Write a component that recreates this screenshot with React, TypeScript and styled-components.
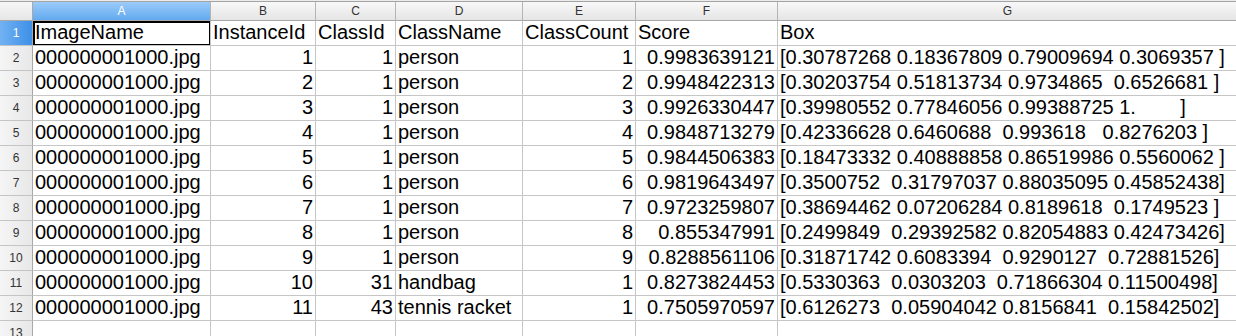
import styled, { createGlobalStyle } from "styled-components";
import { FC } from "react";

const GlobalStyle = createGlobalStyle`
  html, body {
    margin: 0;
    padding: 0;
    background: #ffffff;
    overflow: hidden;
  }
`;

type Align = "left" | "right";

interface Column {
  letter: string;
  width: number;
}

const columns: Column[] = [
  { letter: "A", width: 178 },
  { letter: "B", width: 105 },
  { letter: "C", width: 80 },
  { letter: "D", width: 127 },
  { letter: "E", width: 113 },
  { letter: "F", width: 142 },
  { letter: "G", width: 460 },
];

const header = ["ImageName", "InstanceId", "ClassId", "ClassName", "ClassCount", "Score", "Box"];

const rows: (string | number)[][] = [
  [1, 1, "person", 1, "0.9983639121", "[0.30787268 0.18367809 0.79009694 0.3069357 ]"],
  [2, 1, "person", 2, "0.9948422313", "[0.30203754 0.51813734 0.9734865  0.6526681 ]"],
  [3, 1, "person", 3, "0.9926330447", "[0.39980552 0.77846056 0.99388725 1.        ]"],
  [4, 1, "person", 4, "0.9848713279", "[0.42336628 0.6460688  0.993618   0.8276203 ]"],
  [5, 1, "person", 5, "0.9844506383", "[0.18473332 0.40888858 0.86519986 0.5560062 ]"],
  [6, 1, "person", 6, "0.9819643497", "[0.3500752  0.31797037 0.88035095 0.45852438]"],
  [7, 1, "person", 7, "0.9723259807", "[0.38694462 0.07206284 0.8189618  0.1749523 ]"],
  [8, 1, "person", 8, "0.855347991", "[0.2499849  0.29392582 0.82054883 0.42473426]"],
  [9, 1, "person", 9, "0.8288561106", "[0.31871742 0.6083394  0.9290127  0.72881526]"],
  [10, 31, "handbag", 1, "0.8273824453", "[0.5330363  0.0303203  0.71866304 0.11500498]"],
  [11, 43, "tennis racket", 1, "0.7505970597", "[0.6126273  0.05904042 0.8156841  0.15842502]"],
];

// numeric columns are right-aligned like a spreadsheet does
const alignments: Align[] = ["left", "right", "right", "left", "right", "right", "left"];

const App: FC = () => {
  return (
    <>
      <GlobalStyle />
      <Sheet>
        <Corner />
        {columns.map((col) => (
          <ColHeader key={col.letter} selected={col.letter === "A"}>
            {col.letter}
          </ColHeader>
        ))}

        <RowHeader selected>1</RowHeader>
        {header.map((title, i) => (
          <Cell key={title} align="left">
            {title}
            {i === 0 && (
              <Selection>
                <Handle />
              </Selection>
            )}
          </Cell>
        ))}

        {rows.map((row, r) => (
          <Row key={r} index={r + 2} values={["000000001000.jpg", ...row]} />
        ))}

        <RowHeader selected={false}>13</RowHeader>
        {columns.map((col) => (
          <Cell key={col.letter} align="left" />
        ))}
      </Sheet>
    </>
  );
};

const Row: FC<{ index: number; values: (string | number)[] }> = ({ index, values }) => (
  <>
    <RowHeader selected={false}>{index}</RowHeader>
    {values.map((v, i) => (
      <Cell key={i} align={alignments[i]}>
        {v}
      </Cell>
    ))}
  </>
);

const Sheet = styled.div`
  display: grid;
  grid-template-columns: 33px ${columns.map((c) => `${c.width}px`).join(" ")};
  grid-template-rows: 20px;
  grid-auto-rows: 25px;
  width: 1238px;
  border-top: 1px solid #ececec;
  font-family: "Liberation Sans", Arial, sans-serif;
`;

const Corner = styled.div`
  box-sizing: border-box;
  background: linear-gradient(#f7f7f7, #e6e6e6);
  border-top: 1px solid #a4a4a4;
  border-right: 1px solid #a8a8a8;
  border-bottom: 1px solid #a8a8a8;
`;

const ColHeader = styled.div<{ selected: boolean }>`
  box-sizing: border-box;
  display: flex;
  align-items: center;
  justify-content: center;
  font-size: 12px;
  color: ${({ selected }) => (selected ? "#ffffff" : "#333333")};
  background: ${({ selected }) =>
    selected
      ? "linear-gradient(#9ccbf8, #62aaf1)"
      : "linear-gradient(#f8f8f8, #e5e5e5)"};
  border-top: 1px solid #a4a4a4;
  border-right: 1px solid #b4b4b4;
  border-bottom: 1px solid #a8a8a8;
`;

const RowHeader = styled.div<{ selected: boolean }>`
  box-sizing: border-box;
  display: flex;
  align-items: center;
  justify-content: center;
  font-size: 12px;
  color: ${({ selected }) => (selected ? "#ffffff" : "#333333")};
  background: ${({ selected }) =>
    selected
      ? "linear-gradient(to right, #72b2f3, #3d8fe7)"
      : "linear-gradient(to right, #f5f5f5, #e8e8e8)"};
  border-right: 1px solid #a8a8a8;
  border-bottom: 1px solid #c4c4c4;
`;

const Cell = styled.div<{ align: Align }>`
  box-sizing: border-box;
  position: relative;
  display: flex;
  align-items: flex-end;
  justify-content: ${({ align }) => (align === "right" ? "flex-end" : "flex-start")};
  padding: 0 2px 1px 2px;
  font-size: 20px;
  line-height: 23px;
  color: #000000;
  white-space: pre;
  overflow: hidden;
  border-right: 1px solid #c6c6c6;
  border-bottom: 1px solid #c6c6c6;
  background: #ffffff;
`;

const Selection = styled.div`
  position: absolute;
  top: 0;
  left: 0;
  right: -1px;
  bottom: -1px;
  border: 2px solid #000000;
  pointer-events: none;
`;

const Handle = styled.div`
  position: absolute;
  right: -5px;
  bottom: -5px;
  width: 5px;
  height: 5px;
  background: #000000;
`;

export default App;
